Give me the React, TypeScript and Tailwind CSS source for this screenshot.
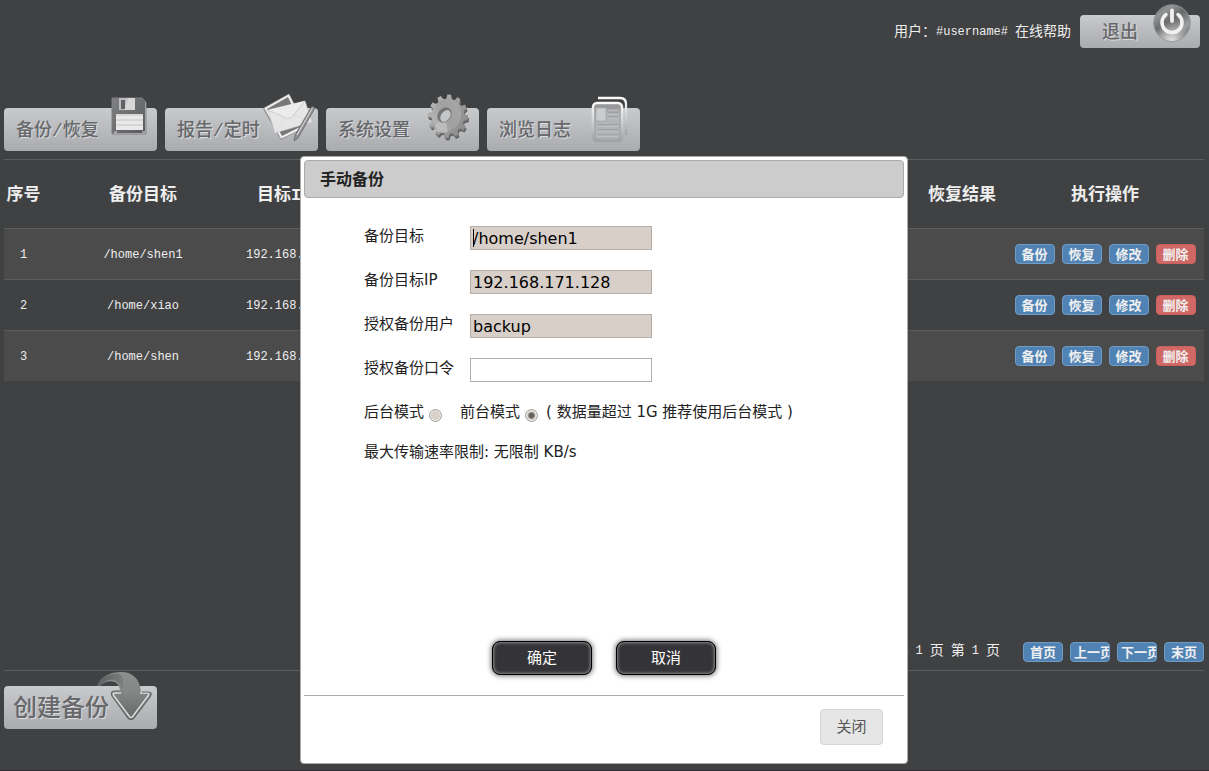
import React, { useState } from "react";

const rows = [
  { id: 1, path: "/home/shen1", ip: "192.168.171.128" },
  { id: 2, path: "/home/xiao", ip: "192.168.171.128" },
  { id: 3, path: "/home/shen", ip: "192.168.171.128" },
];

function FloppyIcon() {
  return (
    <svg className="absolute -top-3 left-[106px]" width="38" height="40" viewBox="0 0 38 40" aria-hidden="true">
      <defs>
        <linearGradient id="floppy" x1="0" y1="0" x2="1" y2="1">
          <stop offset="0" stopColor="#808182" />
          <stop offset="1" stopColor="#58595b" />
        </linearGradient>
      </defs>
      <path d="M2 2H32L36 6V38H2Z" fill="url(#floppy)" stroke="#7e7f80" />
      <path d="M3 37.5H35.5V6.5" fill="none" stroke="#a2a3a4" />
      <path d="M9 2H25V14H9Z" fill="#bdbebf" />
      <path d="M18 2H25V14H14Z" fill="#d6d6d7" />
      <path d="M11 4H15V13H11Z" fill="#616264" />
      <path d="M6 18H33V34H6Z" fill="#e9e9e9" />
      <path d="M6 19H33M6 24H33M6 29H33" stroke="#c3c4c5" />
      <path d="M4 36H7M32 36H35" stroke="#dcdcdc" />
    </svg>
  );
}

function MailIcon() {
  return (
    <svg className="absolute -top-4 left-[97px]" width="56" height="50" viewBox="0 0 56 50" aria-hidden="true">
      <path d="M1 17 27 2 34 14 38 38 19 48Z" fill="#555" opacity=".45" />
      <path d="M2 16 27 2 44 35 19 47Z" fill="#f0f0f0" stroke="#999" strokeWidth=".6" />
      <path d="M5 17 26 5 40 34 20 44Z" fill="#77787a" />
      <path d="M6 18 43 9 50 30 13 41Z" fill="#e6e6e6" stroke="#c6c6c6" strokeWidth=".6" />
      <path d="M6 18 24 26C27 27 29 26 31 24L43 9" fill="#ececec" stroke="#c6c6c6" strokeWidth=".8" />
      <path d="M13 41 23 26M50 30 32 23" fill="none" stroke="#d8d8d8" strokeWidth=".7" />
      <path d="M50 14 53 16 36 46 32 49 33 43Z" fill="#929395" stroke="#626365" strokeWidth=".8" />
      <path d="M50.500 16 35 43" stroke="#dedede" />
    </svg>
  );
}

const gearPoints = Array.from({ length: 12 }, (_, tooth) =>
  [
    [-0.5, 17],
    [-0.28, 18],
    [-0.2, 21.5],
    [0.16, 21.5],
    [0.28, 18],
    [0.5, 17],
  ]
    .map(([shift, radius]) => {
      const angle = ((tooth + shift) * Math.PI) / 6 - 1.5;
      return `${(23 + radius * 0.93 * Math.cos(angle)).toFixed(1)},${(22 + radius * Math.sin(angle)).toFixed(1)}`;
    })
    .join(" "),
).join(" ");

function GearIcon() {
  return (
    <svg className="absolute -top-[14px] left-[99px]" width="46" height="50" viewBox="0 0 46 50" aria-hidden="true">
      <defs>
        <linearGradient id="gear" x1="0" y1="0.2" x2="1" y2="0.8">
          <stop offset="0" stopColor="#b6b6b6" />
          <stop offset=".45" stopColor="#a2a2a2" />
          <stop offset="1" stopColor="#8a8a8a" />
        </linearGradient>
        <linearGradient id="gearFace" x1="0" y1="1" x2="1" y2="0">
          <stop offset="0" stopColor="#bdbdbd" />
          <stop offset=".5" stopColor="#a0a0a0" />
          <stop offset="1" stopColor="#a9a9a9" />
        </linearGradient>
      </defs>
      <polygon points={gearPoints} fill="#646464" transform="translate(1 3)" />
      <polygon points={gearPoints} fill="#787878" transform="translate(0 1.500)" />
      <polygon points={gearPoints} fill="url(#gear)" />
      <ellipse cx="21.500" cy="21" rx="14.500" ry="16" transform="rotate(15 21.500 21)" fill="url(#gearFace)" />
      <path d="M14 28 8 34C12 39 19 40 23 38L21 29Z" fill="#c8c8c8" opacity=".6" />
      <ellipse cx="19.500" cy="21" rx="8" ry="6.500" transform="rotate(-50 19.500 21)" fill="#747474" />
      <ellipse cx="20.500" cy="22" rx="6.500" ry="4.500" transform="rotate(-55 20.500 22)" fill="#c4c5c7" />
    </svg>
  );
}

function DocumentsIcon() {
  return (
    <svg className="absolute -top-3 left-[103px]" width="40" height="48" viewBox="0 0 40 48" aria-hidden="true">
      <defs>
        <linearGradient id="docEdge" x1="0" y1="0" x2="0" y2="1">
          <stop offset="0" stopColor="#fafafa" />
          <stop offset=".5" stopColor="#d0d1d3" />
          <stop offset="1" stopColor="#a0a1a4" />
        </linearGradient>
        <linearGradient id="docFace" x1="0" y1="0" x2="0" y2="1">
          <stop offset="0" stopColor="#8f9092" />
          <stop offset=".3" stopColor="#b4b5b7" />
          <stop offset="1" stopColor="#b2b3b6" />
        </linearGradient>
      </defs>
      <path d="M8 2H30Q36 2 36 8V39" fill="none" stroke="url(#docEdge)" strokeWidth="2.300" />
      <rect x="3" y="7" width="29" height="38" rx="4" fill="url(#docFace)" stroke="url(#docEdge)" strokeWidth="2.500" />
      <path d="M5 11H30V43H5Z" fill="none" stroke="#98999c" strokeWidth=".7" />
      <rect x="6" y="12" width="10" height="13" fill="#cccdcf" stroke="#9d9ea0" strokeWidth=".6" />
      <path d="M18 13H28M18 17H28M18 21H28M8 29H28M8 34H28M8 39H28" stroke="#8e8f92" />
      <path d="M18 14H28M18 18H28M18 22H28M8 30H28M8 35H28M8 40H28" stroke="#d2d3d5" strokeWidth=".7" />
    </svg>
  );
}

function ArrowIcon() {
  return (
    <svg className="absolute -top-[14px] left-[93px]" width="56" height="50" viewBox="0 0 56 50" aria-hidden="true">
      <defs>
        <linearGradient id="arrow" x1="0" y1="0" x2="0" y2="1">
          <stop offset="0" stopColor="#8d8e8e" />
          <stop offset=".4" stopColor="#858686" />
          <stop offset="1" stopColor="#656666" />
        </linearGradient>
        <linearGradient id="arrowTail" x1="0" y1="0" x2="1" y2="0">
          <stop offset="0" stopColor="#5b5c5d" />
          <stop offset="1" stopColor="#7d7e7e" />
        </linearGradient>
      </defs>
      <path d="M0 14C4 4 14 0 24 0C36 0 43 7 44 20H52C55 20 55 22 54 24L37 46C35 49 33 49 31 46L15 24C13 22 14 19 17 19H23C23 10 13 5 3 14Z" fill="url(#arrow)" />
      <path d="M0 14C4 5 13 1 22 2C27 4 27 12 25 17C22 7 12 4 3 14Z" fill="url(#arrowTail)" />
      <path d="M24 21H18Q15 21 17 24L32 44Q34 47 36 44L51 24Q53 21 50 21H43" fill="none" stroke="#dcdddd" strokeWidth="1.500" />
      <path d="M23 19H17Q13 20 15 24L31 46Q34 49 37 46L53 25Q56 20 51 20H45" fill="none" stroke="#67696b" strokeWidth="1.200" />
    </svg>
  );
}

function PowerIcon() {
  return (
    <svg className="absolute -top-[11px] left-[73px]" width="38" height="38" viewBox="0 0 38 38" aria-hidden="true">
      <defs>
        <linearGradient id="power" x1="0" y1="0" x2=".7" y2="1">
          <stop offset="0" stopColor="#5f6061" />
          <stop offset=".25" stopColor="#929394" />
          <stop offset=".5" stopColor="#68696a" />
          <stop offset=".8" stopColor="#9d9e9f" />
          <stop offset="1" stopColor="#707172" />
        </linearGradient>
        <radialGradient id="powerGlow" cx=".5" cy="1" r=".55">
          <stop offset="0" stopColor="#e5e5e5" />
          <stop offset="1" stopColor="#bbb" stopOpacity="0" />
        </radialGradient>
      </defs>
      <circle cx="19" cy="19" r="18.200" fill="url(#power)" stroke="#8e8f90" />
      <circle cx="19" cy="19" r="18" fill="url(#powerGlow)" />
      <path d="M13 10.500A10 10 0 1 0 25 10.500" fill="none" stroke="#f1f1f1" strokeWidth="3.500" strokeLinecap="round" />
      <path d="M19 6.500V17" stroke="#f1f1f1" strokeWidth="3.800" strokeLinecap="round" />
    </svg>
  );
}

const silver =
  "relative shrink-0 rounded-[4px] bg-linear-to-b from-[#c9cacc] to-[#a9abaf] pt-1 text-left font-medium text-[#67686b] [text-shadow:1px_1px_0_#dcdddf]";

function NavButton({ label, icon }: { label: string; icon: React.ReactNode }) {
  return (
    <button type="button" className={`${silver} h-[43px] w-[153px] pl-3 text-[18px]`}>
      {label}
      {icon}
    </button>
  );
}

function SmallButton({ label, danger = false }: { label: string; danger?: boolean }) {
  return (
    <button
      type="button"
      className={`h-5 w-10 overflow-hidden rounded-[4px] border px-[3px] pt-[2px] text-[13px] leading-[18px] font-bold whitespace-nowrap text-[#f0f0f0] ${
        danger ? "border-[#c9605f] bg-[#d06866]" : "border-[#6f9cc5] bg-[#5083b4]"
      }`}
    >
      {label}
    </button>
  );
}

const inputBase = "block h-6 w-[182px] rounded-none border px-[2px] text-[16px] leading-[22px] text-black outline-none";

function Field({
  id,
  label,
  value,
  caret = false,
}: {
  id: string;
  label: string;
  value?: string;
  caret?: boolean;
}) {
  return (
    <div className="flex items-start">
      <label htmlFor={id} className="w-[106px] leading-5">
        {label}
      </label>
      <div className="relative">
        {value === undefined ? (
          <input id={id} type="password" className={`${inputBase} border-[#b5ada6] bg-white`} />
        ) : (
          <input id={id} type="text" readOnly value={value} className={`${inputBase} border-[#b5ada6] bg-[#d8cfc9]`} />
        )}
        {caret && <span className="absolute top-[3px] left-[3px] h-[18px] w-px bg-black" />}
      </div>
    </div>
  );
}

const radioClass =
  "size-[13px] appearance-none rounded-full border border-[#aaa39d] bg-[#d8d1cb] shadow-[inset_0_0_0_1px_#ebe7e3] checked:bg-radial checked:from-[#66625f] checked:from-30% checked:to-[#d8d1cb] checked:to-50%";

const dialogButton =
  "h-[34px] w-[100px] rounded-[8px] border border-black bg-[#343337] text-[15px] text-white shadow-[inset_0_0_3px_1px_#8a8a8a,0_0_5px_1px_#777]";

function BackupDialog() {
  const [mode, setMode] = useState("front");
  return (
    <div className="absolute inset-0 flex items-start justify-center pt-[156px] pr-px">
      <section
        role="dialog"
        aria-labelledby="dialog-title"
        className="flex min-h-[608px] w-[608px] flex-col rounded-[4px] border border-[#aaa] bg-white p-[3px] font-['DejaVu_Sans','Noto_Sans_CJK_SC',sans-serif] text-[15px] text-[#222]"
      >
        <h2
          id="dialog-title"
          className="h-[38px] rounded-[4px] border border-[#aaa] bg-[#ccc] pt-px pl-[15px] text-[16px] leading-9 font-bold"
        >
          手动备份
        </h2>
        <form className="flex flex-1 flex-col px-[60px] pt-7" onSubmit={(e) => e.preventDefault()}>
          <div className="flex flex-col gap-5">
            <Field id="target" label="备份目标" value="/home/shen1" caret />
            <Field id="target-ip" label="备份目标IP" value="192.168.171.128" />
            <Field id="user" label="授权备份用户" value="backup" />
            <Field id="password" label="授权备份口令" />
            <div className="flex leading-5 whitespace-nowrap">
              <label className="flex items-end gap-[5px]">
                后台模式
                <input
                  type="radio"
                  name="mode"
                  className={radioClass}
                  checked={mode === "back"}
                  onChange={() => setMode("back")}
                />
              </label>
              <label className="ml-[18px] flex items-end gap-[5px]">
                前台模式
                <input
                  type="radio"
                  name="mode"
                  className={radioClass}
                  checked={mode === "front"}
                  onChange={() => setMode("front")}
                />
              </label>
              <span className="ml-2">( 数据量超过 1G 推荐使用后台模式 )</span>
            </div>
            <p className="leading-5">最大传输速率限制: 无限制 KB/s</p>
          </div>
          <div className="mt-auto flex justify-center gap-6 pb-5">
            <button type="submit" className={dialogButton}>
              确定
            </button>
            <button type="button" className={dialogButton}>
              取消
            </button>
          </div>
        </form>
        <footer className="flex justify-end border-t border-[#aaa] pt-[13px] pr-[21px] pb-[15px]">
          <button
            type="button"
            className="h-9 w-[63px] rounded-[4px] border border-[#d5d5d5] bg-[#e6e6e6] text-[15px] text-[#555]"
          >
            关闭
          </button>
        </footer>
      </section>
    </div>
  );
}

export default function App() {
  return (
    <div className="relative flex min-h-screen flex-col overflow-hidden border-b border-[#2e2e30] bg-[#404143] px-1 font-['Liberation_Mono','Noto_Sans_CJK_SC',monospace] text-[#eee]">
      <header className="flex justify-end pt-[15px] pr-[5px]">
        <div className="mr-[9px] flex items-center text-[14px] leading-8">
          <span>用户：</span>
          <span className="text-[12px]">#username#</span>
          <a href="#help" className="ml-[7px]">
            在线帮助
          </a>
        </div>
        <button type="button" className={`${silver} h-[33px] w-[120px] pl-[22px] text-[18px]`}>
          退出
          <PowerIcon />
        </button>
      </header>

      <nav className="mt-[60px] flex gap-2">
        <NavButton label="备份/恢复" icon={<FloppyIcon />} />
        <NavButton label="报告/定时" icon={<MailIcon />} />
        <NavButton label="系统设置" icon={<GearIcon />} />
        <NavButton label="浏览日志" icon={<DocumentsIcon />} />
      </nav>

      <main className="mr-px mt-2 flex flex-1 flex-col border-t border-[#5c5d5d]">
        <table className="w-full table-fixed border-collapse text-center text-[12px]">
          <colgroup>
            <col className="w-[39px]" />
            <col className="w-[200px]" />
            <col className="w-[114px]" />
            <col />
            <col className="w-[88px]" />
            <col className="w-[198px]" />
          </colgroup>
          <thead>
            <tr className="h-[68px] text-[17px] whitespace-nowrap">
              <th className="pt-1">序号</th>
              <th className="pt-1">备份目标</th>
              <th className="pt-1 pl-[14px] text-left">目标IP</th>
              <th />
              <th className="pt-1">恢复结果</th>
              <th className="pt-1">执行操作</th>
            </tr>
          </thead>
          <tbody>
            {rows.map((row) => (
              <tr key={row.id} className="h-[51px] border-t border-[#5c5d5d] odd:bg-[#4b4b4b]">
                <td className="pt-[2px]">{row.id}</td>
                <td className="pt-[2px]">{row.path}</td>
                <td className="pt-[2px]">{row.ip}</td>
                <td />
                <td />
                <td>
                  <div className="flex justify-center gap-[7px]">
                    <SmallButton label="备份" />
                    <SmallButton label="恢复" />
                    <SmallButton label="修改" />
                    <SmallButton label="删除" danger />
                  </div>
                </td>
              </tr>
            ))}
          </tbody>
        </table>
        <div className="mt-auto flex items-start justify-end pb-2">
          <p className="mr-[23px] flex gap-[7px] text-[14px] leading-[18px]">
            <span>共</span>
            <span className="text-[12px]">1</span>
            <span>页</span>
            <span>第</span>
            <span className="text-[12px]">1</span>
            <span>页</span>
          </p>
          <div className="flex gap-[7px]">
            <SmallButton label="首页" />
            <SmallButton label="上一页" />
            <SmallButton label="下一页" />
            <SmallButton label="末页" />
          </div>
        </div>
      </main>

      <footer className="mr-px border-t border-[#5c5d5d] pt-[15px] pb-[41px]">
        <button type="button" className={`${silver} block h-[43px] w-[153px] pl-[9px] text-[24px]`}>
          创建备份
          <ArrowIcon />
        </button>
      </footer>

      <BackupDialog />
    </div>
  );
}
